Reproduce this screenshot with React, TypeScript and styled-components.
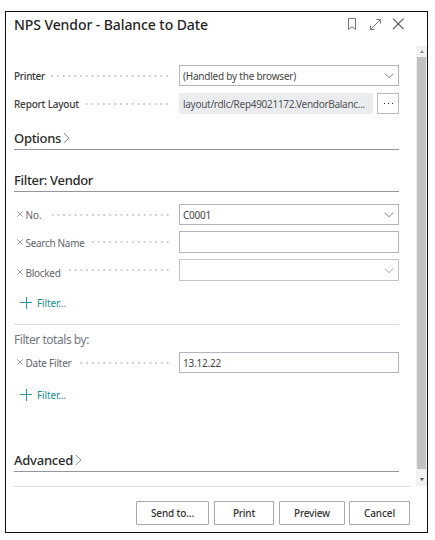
import React from 'react';
import styled, { createGlobalStyle } from 'styled-components';

interface FieldProps {
  label: string;
  value?: string;
  valueWidth?: number;
  labelWidth: number;
  height: number;
  gap?: number;
  kind?: 'text' | 'select' | 'lookup';
  filter?: boolean;
  muted?: boolean;
  drop?: number;
}

function Chevron({ color = '#80858a' }: { color?: string }) {
  return (
    <svg width="10" height="6" viewBox="0 0 10 6" fill="none">
      <path d="M0.8 0.7L5 4.7L9.2 0.7" stroke={color} />
    </svg>
  );
}

// text is condensed or widened to the given width
function Fit({ $w, children }: { $w: number; children: string }) {
  const ref = React.useRef<HTMLSpanElement>(null);
  React.useLayoutEffect(() => {
    const el = ref.current;
    if (!el) return;
    el.style.letterSpacing = '0px';
    const natural = el.getBoundingClientRect().width;
    el.style.letterSpacing = `${($w - natural) / children.length}px`;
  }, [$w, children]);
  return <FitText ref={ref}>{children}</FitText>;
}

function SectionTitle({ title, width, collapsed }: { title: string; width: number; collapsed?: boolean }) {
  return (
    <>
      <Fit $w={width}>{title}</Fit>
      {collapsed && (
        <svg width="7" height="12" viewBox="0 0 7 12" fill="none">
          <path d="M0.8 1L5.8 6L0.8 11" stroke="#7b8086" />
        </svg>
      )}
    </>
  );
}

function Field({
  label,
  value = '',
  valueWidth = 0,
  labelWidth,
  height,
  gap = 0,
  kind = 'text',
  filter,
  muted,
  drop = 0,
}: FieldProps) {
  return (
    <Row $height={height} $gap={gap}>
      <LabelArea>
        {filter && (
          <RemoveIcon width="6" height="6" viewBox="0 0 6 6" $drop={drop}>
            <path d="M0.3 0.3L5.7 5.7M5.7 0.3L0.3 5.7" stroke="#84898e" strokeWidth="0.8" />
          </RemoveIcon>
        )}
        <Label $filter={filter} $drop={drop}>
          <Fit $w={labelWidth}>{label}</Fit>
        </Label>
        <Dots />
      </LabelArea>
      {kind === 'lookup' ? (
        <>
          <Readonly>
            <Fit $w={valueWidth}>{value}</Fit>
          </Readonly>
          <More>
            <i />
            <i />
            <i />
          </More>
        </>
      ) : (
        <Input $muted={muted}>
          <span>{value && <Fit $w={valueWidth}>{value}</Fit>}</span>
          {kind === 'select' && <Chevron color={muted ? '#a3a7ab' : undefined} />}
        </Input>
      )}
    </Row>
  );
}

function AddFilter() {
  return (
    <Add>
      <svg width="12" height="12" viewBox="0 0 12 12">
        <path d="M6.5 0V12M0 5.5H12" stroke="#2a9a9c" />
      </svg>
      <Fit $w={29}>Filter...</Fit>
    </Add>
  );
}

function App() {
  return (
    <Page>
      <GlobalStyle />
      <Dialog>
        <Header>
          <Title>
            <Fit $w={194}>NPS Vendor - Balance to Date</Fit>
          </Title>
          <svg width="58" height="14" viewBox="0 0 58 14" fill="none">
            <path d="M2.5 0.5H9.5V11.5L6 8.8L2.5 11.5Z" stroke="#777" />
            <path d="M24.7 11.3L34.3 1.7M30.5 1.5H34.5V5.5M24.5 7.5V11.5H28.5" stroke="#777" />
            <path d="M47 0.7L57.5 11.2M57.5 0.7L47 11.2" stroke="#555" strokeWidth="1.2" />
          </svg>
        </Header>
        <Body>
          <Content>
            <Field
              label="Printer"
              value="(Handled by the browser)"
              valueWidth={113}
              labelWidth={31}
              height={21}
              kind="select"
            />
            <Field
              label="Report Layout"
              value="layout/rdlc/Rep49021172.VendorBalanc..."
              valueWidth={182}
              labelWidth={65}
              height={21}
              gap={7}
              kind="lookup"
            />
            <Section $top={12}>
              <SectionTitle title="Options" width={47} collapsed />
            </Section>
            <Section $top={18}>
              <SectionTitle title="Filter: Vendor" width={79} />
            </Section>
            <Field
              label="No."
              value="C0001"
              valueWidth={28}
              labelWidth={16}
              height={21}
              gap={12}
              kind="select"
              filter
            />
            <Field label="Search Name" labelWidth={59} height={22} gap={6} filter />
            <Field label="Blocked" labelWidth={35} height={22} gap={6} kind="select" filter muted drop={2} />
            <AddFilter />
            <Divider />
            <Totals>
              <Fit $w={75}>Filter totals by:</Fit>
            </Totals>
            <Field
              label="Date Filter"
              value="13.12.22"
              valueWidth={38}
              labelWidth={46}
              height={21}
              gap={3}
              filter
            />
            <AddFilter />
            <Section $top={47}>
              <SectionTitle title="Advanced" width={59} collapsed />
            </Section>
          </Content>
          <Scrollbar>
            <Arrow $up />
            <Thumb />
            <Arrow />
          </Scrollbar>
        </Body>
        <Footer>
          <Button $width={73}>
            <Fit $w={43}>Send to...</Fit>
          </Button>
          <Button $width={60}>
            <Fit $w={22}>Print</Fit>
          </Button>
          <Button $width={66}>
            <Fit $w={36}>Preview</Fit>
          </Button>
          <Button $width={61}>
            <Fit $w={31}>Cancel</Fit>
          </Button>
        </Footer>
      </Dialog>
    </Page>
  );
}

const GlobalStyle = createGlobalStyle`
  * {
    box-sizing: border-box;
  }
  body {
    margin: 0;
    background: #fff;
    font-family: 'Noto Sans', 'Open Sans', sans-serif;
  }
`;

const Page = styled.main`
  width: 435px;
  height: 540px;
  padding: 11px 7px 7px 5px;
`;

const Dialog = styled.section`
  width: 423px;
  height: 522px;
  border: 1px solid #111;
  display: flex;
  flex-direction: column;
`;

const Header = styled.header`
  height: 34px;
  padding: 0 23px 8px 8px;
  display: flex;
  align-items: center;
  justify-content: space-between;
  flex-shrink: 0;
`;

const Title = styled.h1`
  margin: 0;
  font-size: 14px;
  font-weight: 500;
  line-height: 20px;
  color: #262626;
`;

const FitText = styled.span`
  white-space: nowrap;
`;

const Body = styled.div`
  height: 440px;
  display: flex;
  justify-content: space-between;
`;

const Content = styled.div`
  width: 385px;
  margin-left: 8px;
  padding-top: 19px;
`;

const Row = styled.div<{ $height: number; $gap: number }>`
  height: ${(props) => props.$height}px;
  margin-top: ${(props) => props.$gap}px;
  display: flex;
`;

const LabelArea = styled.div`
  width: 165px;
  padding-right: 9px;
  display: flex;
  align-items: center;
`;

const RemoveIcon = styled.svg<{ $drop: number }>`
  margin: ${(props) => props.$drop * 2 - 1}px 3px 0 3px;
  flex-shrink: 0;
`;

const Label = styled.span<{ $filter?: boolean; $drop: number }>`
  margin-top: ${(props) => props.$drop * 2 + 1}px;
  margin-left: ${(props) => (props.$filter ? -0.5 : 0)}px;
  font-size: 10px;
  font-weight: ${(props) => (props.$filter ? 400 : 500)};
  line-height: 14px;
  color: ${(props) => (props.$filter ? '#5f656d' : '#3a3a3a')};
`;

const Dots = styled.span`
  flex: 1;
  height: 2px;
  margin-left: 6px;
  background: radial-gradient(circle at center, #b4b8bb 0.4px, transparent 1.3px) right center / 5.75px 2px
    repeat-x;
`;

const Input = styled.div<{ $muted?: boolean }>`
  width: 220px;
  padding: 1px 4px 0 3px;
  border: 1px solid ${(props) => (props.$muted ? '#c4c5c8' : '#b1b5bf')};
  display: flex;
  align-items: center;
  justify-content: space-between;
  font-size: 10px;
  line-height: 14px;
  color: #444;
`;

const Readonly = styled.div`
  width: 194px;
  padding: 1px 0 0 4px;
  background: #ebecee;
  display: flex;
  align-items: center;
  font-size: 10px;
  line-height: 14px;
  color: #505358;
`;

const More = styled.button`
  width: 22px;
  margin: 0 0 0 4px;
  padding: 0;
  border: 1px solid #b7b9bd;
  background: #fff;
  display: flex;
  align-items: center;
  justify-content: center;
  gap: 3px;
  i {
    width: 1px;
    height: 1px;
    background: #333;
  }
`;

const Section = styled.h2<{ $top: number }>`
  height: 24px;
  margin: ${(props) => props.$top}px 0 0;
  border-bottom: 1px solid #92979f;
  display: flex;
  align-items: center;
  gap: 2px;
  font-size: 13px;
  font-weight: 500;
  line-height: 18px;
  color: #2b2b2b;
`;

const Add = styled.div`
  height: 12px;
  margin: 16px 0 0 6px;
  display: flex;
  align-items: center;
  gap: 5px;
  font-size: 10px;
  line-height: 14px;
  color: #208d90;
`;

const Divider = styled.div`
  height: 1px;
  margin-top: 15px;
  background: #d8dae1;
`;

const Totals = styled.div`
  margin-top: 5px;
  font-size: 12px;
  line-height: 19px;
  color: #73777e;
`;

const Scrollbar = styled.div`
  width: 11px;
  background: #f1f1f1;
  display: flex;
  flex-direction: column;
  align-items: center;
`;

const Arrow = styled.span<{ $up?: boolean }>`
  height: ${(props) => (props.$up ? 11 : 17)}px;
  padding-bottom: ${(props) => (props.$up ? 0 : 5)}px;
  display: flex;
  align-items: ${(props) => (props.$up ? 'center' : 'flex-end')};
  &::before {
    content: '';
    border: 2.5px solid transparent;
    border-top: ${(props) => (props.$up ? '0' : '3px solid #505050')};
    border-bottom: ${(props) => (props.$up ? '3px solid #8b8b8b' : '0')};
  }
`;

const Thumb = styled.div`
  width: 9px;
  flex: 1;
  background: #c1c1c1;
`;

const Footer = styled.footer`
  margin: 0 17px 0 8px;
  padding-top: 14px;
  border-top: 1px solid #dedede;
  display: flex;
  justify-content: flex-end;
  gap: 5px;
`;

const Button = styled.button<{ $width: number }>`
  width: ${(props) => props.$width}px;
  height: 24px;
  padding: 0;
  border: 1px solid #a9a9a9;
  border-radius: 1px;
  background: #fff;
  font-family: inherit;
  font-size: 10px;
  font-weight: 500;
  color: #333;
  &:last-child {
    margin-left: -1px;
  }
`;

export default App;
